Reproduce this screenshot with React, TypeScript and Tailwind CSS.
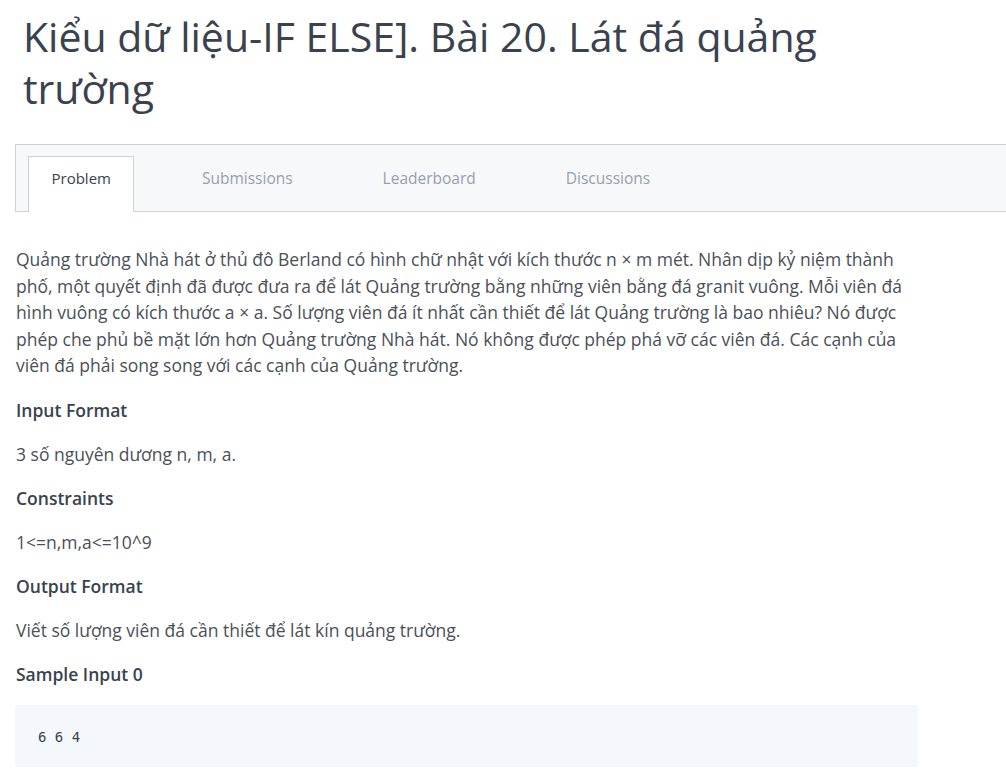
import React from "react";

const tabs = ["Problem", "Submissions", "Leaderboard", "Discussions"];

function App() {
  return (
    <div className="min-h-screen bg-white font-['Open_Sans',sans-serif] text-[#4b5057]">
      <h1 className="pl-[23px] pt-[10px] pr-[150px] text-[41px] font-normal leading-[52px] text-[#39424e]">
        Kiểu dữ liệu-IF ELSE]. Bài 20. Lát đá quảng trường
      </h1>

      <div className="ml-[15px] mt-[30px] flex h-[68px] gap-[45px] border-y border-l border-[#cdd2d6] bg-[#f7f8f9] pl-[12px]">
        {tabs.map((t, i) => (
          <div
            key={t}
            className={
              i === 0
                ? "relative -mb-px mt-[11px] flex items-start border-x border-t border-[#cdd2d6] bg-white px-[22.5px] pt-[10px] text-[15px] text-[#39424e]"
                : "flex items-center px-[22.5px] pt-[2px] text-[15.5px] text-[#979faf]"
            }
          >
            {t}
          </div>
        ))}
      </div>

      <div className="w-[918px] pl-[16px] pt-[34px] text-[17.5px] leading-[26.5px]">
        <p>
          Quảng trường Nhà hát ở thủ đô Berland có hình chữ nhật với kích thước n × m mét. Nhân dịp kỷ niệm thành phố, một quyết định đã được đưa ra để lát Quảng trường bằng những viên bằng đá granit vuông. Mỗi viên đá hình vuông có kích thước a × a. Số lượng viên đá ít nhất cần thiết để lát Quảng trường là bao nhiêu? Nó được phép che phủ bề mặt lớn hơn Quảng trường Nhà hát. Nó không được phép phá vỡ các viên đá. Các cạnh của viên đá phải song song với các cạnh của Quảng trường.
        </p>
        <h3 className="mt-[18px] font-semibold text-[#39424e]">Input Format</h3>
        <p className="mt-[17.5px]">3 số nguyên dương n, m, a.</p>
        <h3 className="mt-[17.5px] font-semibold text-[#39424e]">Constraints</h3>
        <p className="mt-[17.5px]">1&lt;=n,m,a&lt;=10^9</p>
        <h3 className="mt-[17.5px] font-semibold text-[#39424e]">Output Format</h3>
        <p className="mt-[17.5px]">Viết số lượng viên đá cần thiết để lát kín quảng trường.</p>
        <h3 className="mt-[17.5px] font-semibold text-[#39424e]">Sample Input 0</h3>
        <div className="-ml-px mt-[18px] h-[62px] rounded-[3px] bg-[#f4f8fd] pl-[23px] pt-[19px] font-['DejaVu_Sans_Mono',monospace] text-[14px] text-[#39424e]">
          6 6 4
        </div>
      </div>
    </div>
  );
}

export default App;
